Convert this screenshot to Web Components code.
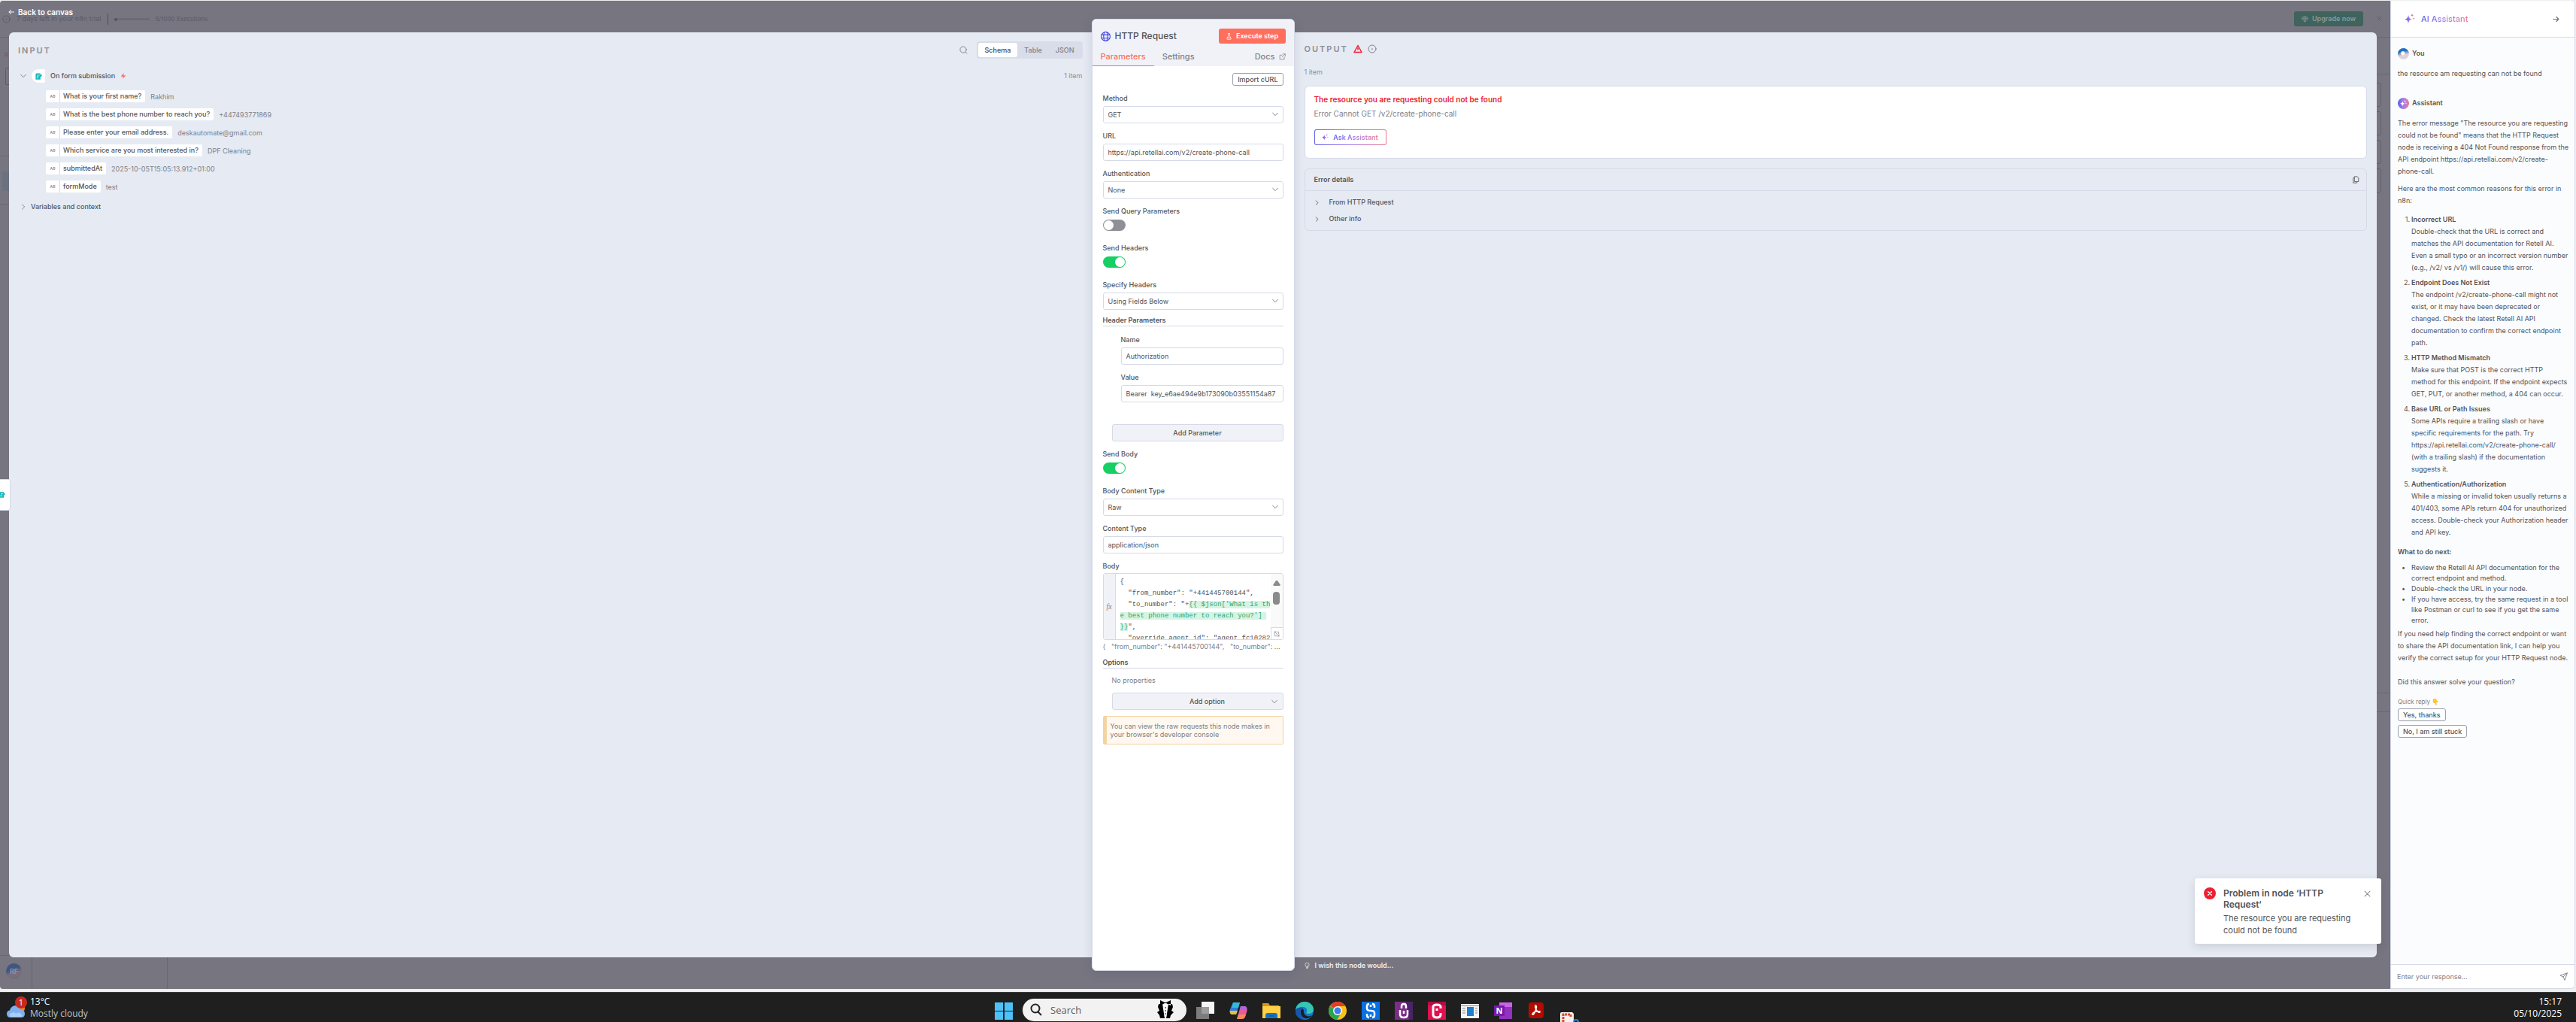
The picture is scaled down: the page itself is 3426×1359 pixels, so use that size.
<!DOCTYPE html>
<html lang="en">
<head>
<meta charset="utf-8">
<title>HTTP Request</title>
<style>
    html, body {
        height: 100%;
        margin: 0;
    }
    body {
        display: flex;
        flex-direction: column;
        overflow: hidden;
        background: #efeff0;
        color: #525356;
        font: 9px/14px Inter, "Liberation Sans", sans-serif;
        --border: #d6dae8;
        --panel: #e6eaf3;
        --muted: #7e8188;
        --primary: #ff6f5c;
        --ai: linear-gradient(90deg, #5b60e8, #aa7bec 50%, #ec7b8e);
    }
    main {
        flex: 1;
        min-height: 0;
        display: flex;
        padding: 1px 1px 4px 0;
    }
    node-editor {
        flex: 1;
        min-width: 0;
    }
    assistant-panel {
        width: 246px;
    }
</style>
</head>
<body>
<main>
    <node-editor>
        <input-panel></input-panel>
        <node-panel></node-panel>
        <output-panel></output-panel>
    </node-editor>
    <assistant-panel></assistant-panel>
</main>
<task-bar></task-bar>

<script>
const svg = (body, size = 12, box = 24) =>
    `<svg width="${size}" height="${size}" viewBox="0 0 ${box} ${box}" fill="none" stroke="currentColor" stroke-width="2" stroke-linecap="round" stroke-linejoin="round" aria-hidden="true">${body}</svg>`;

const SPARK = 'M9 3c1 7 3 9 9 10.500c-6 1.500-8 3.500-9 10.500c-1-7-3-9-9-10.500c6-1.500 8-3.500 9-10.500zM18 0c.4 2.500 1.500 3.500 4 4c-2.500.5-3.600 1.500-4 4c-.4-2.500-1.500-3.500-4-4c2.500-.5 3.600-1.500 4-4zM22 9l1 2 1.500.8-1.500.8-1 2-1-2-1.500-.8 1.500-.8z';
const ICONS = {
    down: '<path stroke-width="3" d="M2 7l10 10L22 7"/>',
    right: '<path stroke-width="3" d="M8 3l9 9-9 9"/>',
    back: '<path stroke-width="3" d="M22 12H3M11 4l-8 8 8 8"/>',
    forward: '<path stroke-width="3" d="M2 12h19M13 4l8 8-8 8"/>',
    close: '<path stroke-width="3" d="M3 3l18 18M21 3L3 21"/>',
    search: '<circle cx="11" cy="11" r="9"/><path d="M18 18l4 4"/>',
    info: '<circle cx="12" cy="12" r="10"/><path stroke-width="3" d="M12 12v1"/>',
    warning: '<path stroke-width="3" d="M12 3L2 21h20zM12 10v4"/>',
    bolt: '<path fill="currentColor" stroke="none" d="M14 0L2 14h9l-2 10 13-14h-9z"/>',
    flask: '<path d="M9 2h6M10 2v7L5 20q-1 2 1 2h12q2 0 1-2L14 9V2M7 16h10"/>',
    external: '<path d="M19 13v8H3V6h8M14 2h8v8M22 2L11 13"/>',
    globe: '<circle cx="12" cy="12" r="11"/><ellipse cx="12" cy="12" rx="5" ry="11"/><path d="M2 8h20M2 16h20"/>',
    copy: '<path d="M9 2h8l4 4v12H9zM6 6H4v16h12v-2"/>',
    bulb: '<path d="M9 16c0-3-4-4-4-9a7 6 0 0 1 14 0c0 5-4 6-4 9zM10 20h4M12 16v-5"/>',
    gem: '<path d="M6 3h12l5 6-11 13L1 9zM1 9h22M8 9l4 13 4-13-4-6z"/>',
    expand: '<path d="M3 9V3h6M3 3l18 18M21 15v6h-6M12 4h8v8M12 20H4v-8"/>',
    send: '<path d="M22 2L2 9l9 4 4 9zM22 2L11 13"/>',
    form: '<path fill="currentColor" stroke="none" d="M3 1h15v6l4-2 2 4-6 6v8H1V5z"/><path stroke="#fff" d="M7 8h7M6 13h5M6 18h3"/>'
};
const icon = (name, size) => svg(ICONS[name], size);
const spark = (size, fill = 'url(#ai)') =>
    svg(`<defs><linearGradient id="ai"><stop stop-color="#5b60e8"/><stop offset=".6" stop-color="#aa7bec"/><stop offset="1" stop-color="#ec7b8e"/></linearGradient></defs><path d="${SPARK}" fill="${fill}" stroke="none"/>`, size, 25);

const BASE = `
    :host, *, ::before, ::after { box-sizing: border-box; }
    svg { display: block; flex: none; }
    button, input, select { font: inherit; color: inherit; margin: 0; }
    button { padding: 0; border: 0; background: none; cursor: pointer; }
    a { color: inherit; text-decoration: none; }
    h1, h2, h3, p, ul, ol, dl, dd, pre { margin: 0; padding: 0; font: inherit; }
    ul, ol { list-style: none; }
`;

class BaseElement extends HTMLElement {
    constructor() {
        super();
        this.shadow = this.attachShadow({mode: 'open'});
    }
    connectedCallback() {
        this.shadow.innerHTML = `<style>${BASE}${this.styles}</style>${this.markup}`;
    }
}

/* a dimmed canvas page with the node dialog over it */
class NodeEditor extends BaseElement {
    get styles() {
        return `
        :host { position: relative; display: flex; flex-direction: column; background: #777580; border-radius: 4px 0 0 4px; overflow: hidden; }
        .under { position: absolute; inset: 0; color: #5d5b67; }
        .trial { position: absolute; left: 3px; top: 15px; display: flex; align-items: center; gap: 8px; height: 18px; }
        .trial span:last-child { font-size: 8px; }
        .bar { width: 47px; height: 3px; border-radius: 2px; background: #6a6b78; }
        .bar::before { content: ''; display: block; width: 4px; height: 4px; border-radius: 2px; background: #55535f; }
        .rule { width: 1px; height: 15px; background: #4e4c58; }
        .upgrade { position: absolute; right: 36px; top: 14px; height: 20px; width: 92px; display: flex; align-items: center; justify-content: center; gap: 5px; border-radius: 3px; background: #40635e; color: #8a9a99; font-weight: 600; }
        .x { position: absolute; right: 11px; top: 20px; }
        .lines { position: absolute; inset: 0; width: 100%; height: 100%; }
        .ghosts { position: absolute; right: 12px; top: 109px; display: grid; gap: 6px; }
        .ghosts i { width: 40px; height: 32px; border: 1px solid #62606c; border-radius: 3px; }
        .left-box { position: absolute; left: 7px; top: 89px; width: 20px; height: 23px; border: 1px solid #5d5b67; border-radius: 2px; }
        .left-fill { position: absolute; left: 3px; top: 227px; width: 20px; height: 26px; border-radius: 2px; background: #6b7180; }
        .knob { position: absolute; left: 6px; top: 69px; width: 5px; height: 5px; border: 1px solid #8f4358; border-radius: 50%; }
        .rf { position: absolute; left: 8px; bottom: 13px; width: 21px; height: 21px; border-radius: 50%; background: linear-gradient(160deg, #41567f 40%, #7d6d7c 60%, #6b6c7c); color: #8d93a6; font-weight: 700; text-align: center; line-height: 21px; }
        header { position: relative; height: 42px; padding: 8px 11px; color: #fff; }
        header a { display: inline-flex; align-items: center; gap: 5px; font-size: 10px; font-weight: 600; }
        .panels { position: relative; flex: 1; min-height: 0; display: grid; grid-template-columns: 1fr 270px 1fr; margin: 0 18px 0 12px; background: var(--panel); border-radius: 6px; }
        ::slotted(node-panel) { margin: -18px 0; }
        footer { position: relative; height: 42px; display: grid; grid-template-columns: 1fr 1fr; margin: 0 18px 0 12px; color: #eeeef2; }
        footer button { grid-column: 2; justify-self: start; align-self: start; display: flex; align-items: center; gap: 6px; padding: 4px 0 4px 147px; font-weight: 600; }
        .prev { position: absolute; left: -2px; top: 636px; width: 16px; height: 42px; border: 1px solid var(--border); border-radius: 3px; background: #fff; color: #0fb8be; display: grid; place-items: center start; }
        toast-message { position: absolute; right: 12px; bottom: 60px; width: 248px; }`;
    }
    get markup() {
        return `
        <div class="under">
            <svg class="lines" stroke="#696773"><path d="M0 48.500H12M0 206.500H12M0 270.500H12M0 1269.500H42M42.500 1272V1314M222.500 1272V1314M3161 48.500H3179M3161 97.500H3179M3161 920.500H3179M3161 945.500H3179"/></svg>
            <div class="trial">${icon('info', 11)}<span>7 days left in your n8n trial</span><i class="rule"></i><i class="bar"></i><span>5/1000 Executions</span></div>
            <button class="upgrade">${icon('gem', 9)}Upgrade now</button>
            <span class="x">${icon('close', 7)}</span>
            <i class="knob"></i><i class="left-box"></i><i class="left-fill"></i>
            <div class="ghosts"><i></i><i></i><i></i><i></i></div>
            <span class="rf">RF</span>
        </div>
        <header><a href="#canvas">${icon('back', 8)}Back to canvas</a></header>
        <div class="panels"><slot></slot></div>
        <footer><button>${icon('bulb', 9)}I wish this node would...</button></footer>
        <button class="prev" aria-label="Previous node">${icon('form', 8)}</button>
        <toast-message>
            <span slot="title">Problem in node ‘HTTP Request‘</span>
            The resource you are requesting could not be found
        </toast-message>`;
    }
}

class ToastMessage extends BaseElement {
    get styles() {
        return `
        :host { display: flex; align-items: flex-start; gap: 10px; padding: 12px 12px 10px; border-radius: 3px; background: #fff; box-shadow: 0 4px 12px rgba(40, 40, 60, .14); font-size: 11px; line-height: 16px; }
        .mark { width: 16px; height: 16px; border-radius: 50%; background: #ee1f32; color: #fff; display: grid; place-items: center; }
        .text { flex: 1; }
        h2 { margin-bottom: 3px; font-size: 12px; line-height: 15px; font-weight: 600; }
        button { padding: 4px 2px; color: #8d9098; }`;
    }
    get markup() {
        return `
        <span class="mark">${svg('<path stroke-width="4" d="M5 5l14 14M19 5L5 19"/>', 8)}</span>
        <div class="text"><h2><slot name="title"></slot></h2><p><slot></slot></p></div>
        <button aria-label="Close">${icon('close', 9)}</button>`;
    }
}

class InputPanel extends BaseElement {
    get rows() {
        return [
            ['What is your first name?', 'Rakhim'],
            ['What is the best phone number to reach you?', '+447493771869'],
            ['Please enter your email address.', 'deskautomate@gmail.com'],
            ['Which service are you most interested in?', 'DPF Cleaning'],
            ['submittedAt', '2025-10-05T15:05:13.912+01:00'],
            ['formMode', 'test']
        ];
    }
    get styles() {
        return `
        :host { display: block; padding: 12px; }
        .head, .group, .row, .pill, .tabs { display: flex; align-items: center; }
        h2 { flex: 1; color: #8c8f98; font-size: 11px; font-weight: 600; letter-spacing: 2px; }
        .head { color: var(--muted); gap: 12px; }
        .tabs { height: 23px; padding: 2px; border-radius: 3px; background: #d9dde9; font-weight: 500; }
        .tabs button { height: 19px; padding: 0 9px; border-radius: 3px; }
        .tabs .on { background: #fff; color: #45464a; }
        .group { margin-top: 14px; padding-left: 3px; font-weight: 500; }
        .group > svg { color: var(--muted); }
        .node { width: 18px; height: 18px; margin: 0 7px 0 7px; border-radius: 9px 2px 2px 9px; background: #fff; color: #0fb8be; display: grid; place-items: center; }
        .bolt { flex: 1; margin-left: 7px; color: var(--primary); }
        .count { color: #8c8f98; font-weight: 400; }
        dl { margin: 9px 0 0 37px; display: grid; gap: 7px; }
        .row { gap: 7px; }
        .pill { height: 16px; border-radius: 2px; background: #fff; font-weight: 500; }
        .pill i { width: 19px; border-right: 1px solid var(--border); font: 600 5px/16px Inter, sans-serif; text-align: center; color: #8a8d96; }
        .pill span { padding: 0 5px 0 4px; }
        dd { padding-top: 3px; color: var(--muted); }
        .vars { margin-top: 12px; gap: 6px; }`;
    }
    get markup() {
        return `
        <div class="head">
            <h2>INPUT</h2>
            <button aria-label="Search">${icon('search', 11)}</button>
            <div class="tabs"><button class="on">Schema</button><button>Table</button><button>JSON</button></div>
        </div>
        <div class="group">${icon('down', 8)}<span class="node">${icon('form', 9)}</span>On form submission<span class="bolt">${icon('bolt', 8)}</span><span class="count">1 item</span></div>
        <dl>${this.rows.map(([key, value]) => `<div class="row"><dt class="pill"><i>AB</i><span>${key}</span></dt><dd>${value}</dd></div>`).join('')}</dl>
        <div class="group vars">${icon('right', 8)}Variables and context</div>`;
    }
}

class OutputPanel extends BaseElement {
    get styles() {
        return `
        :host { display: block; padding: 15px 13px; }
        .head, .bar, li { display: flex; align-items: center; }
        .head { gap: 7px; color: var(--muted); }
        h2 { color: #8c8f98; font-size: 11px; font-weight: 600; letter-spacing: 2px; }
        .head .warn { color: #ee1f32; }
        .count { margin: 17px 0 11px; color: #8c8f98; }
        .card { height: 97px; padding: 9px 12px; border: 1px solid var(--border); border-radius: 6px; background: #fff; }
        .card h3 { color: #ea1f30; font-size: 10px; line-height: 16px; font-weight: 600; }
        .card p { margin: 3px 0 13px; color: var(--muted); font-size: 10px; line-height: 16px; }
        .ask { width: 96px; height: 21px; display: flex; align-items: center; justify-content: center; gap: 6px; border: 1px solid transparent; border-radius: 3px; background: linear-gradient(#fff, #fff) padding-box, var(--ai) border-box; font-weight: 600; }
        .ask span { background: var(--ai); background-clip: text; -webkit-background-clip: text; color: transparent; }
        .details { margin-top: 13px; border: 1px solid var(--border); border-radius: 6px; }
        .bar { height: 29px; justify-content: space-between; padding: 0 9px 0 12px; border-bottom: 1px solid var(--border); font-weight: 600; }
        ul { padding: 4px 12px; }
        li { height: 22px; gap: 13px; font-weight: 500; }`;
    }
    get markup() {
        return `
        <div class="head"><h2>OUTPUT</h2><span class="warn">${icon('warning', 12)}</span>${icon('info', 12)}</div>
        <p class="count">1 item</p>
        <section class="card">
            <h3>The resource you are requesting could not be found</h3>
            <p>Error Cannot GET /v2/create-phone-call</p>
            <button class="ask">${spark(9)}<span>Ask Assistant</span></button>
        </section>
        <section class="details">
            <div class="bar">Error details<button aria-label="Copy">${icon('copy', 10)}</button></div>
            <ul><li>${icon('right', 7)}From HTTP Request</li><li>${icon('right', 7)}Other info</li></ul>
        </section>`;
    }
}

/* kind: text, select or switch */
class FormField extends BaseElement {
    get styles() {
        return `
        :host { display: block; margin-bottom: 10px; }
        :host([kind=switch]) { margin-bottom: 16px; }
        label { display: block; font-weight: 500; }
        .box { position: relative; margin-top: 3px; }
        .box input, select { display: block; width: 100%; height: 23px; padding: 0 6px; border: 1px solid var(--border); border-radius: 3px; background: #fff; appearance: none; outline: none; }
        .box svg { position: absolute; right: 7px; top: 7px; color: var(--muted); pointer-events: none; }
        .switch { display: block; appearance: none; width: 30px; height: 15px; margin: 4px 0 0; padding: 1px; border-radius: 8px; background: #8f9096; }
        .switch::before { content: ''; display: block; width: 13px; height: 13px; border-radius: 50%; background: #fff; }
        .switch:checked { background: #17cf65; }
        .switch:checked::before { margin-left: 15px; }`;
    }
    get control() {
        const value = this.getAttribute('value');
        switch (this.getAttribute('kind')) {
            case 'switch':
                return `<input class="switch" id="field" type="checkbox" ${this.hasAttribute('checked') ? 'checked' : ''}>`;
            case 'select':
                return `<div class="box"><select id="field"><option>${value}</option></select>${icon('down', 8)}</div>`;
            default:
                return `<div class="box"><input id="field" type="text" value="${value}"></div>`;
        }
    }
    get markup() {
        return `<label for="field">${this.getAttribute('label')}</label>${this.control}`;
    }
}

class NodePanel extends BaseElement {
    get styles() {
        return `
        :host { position: relative; display: block; border: 1px solid var(--border); border-radius: 6px; background: #fff; box-shadow: 0 4px 14px rgba(60, 60, 100, .14); overflow: hidden; }
        header { height: 62px; padding: 12px 11px 0; background: #f1f2f8; }
        .title, nav { display: flex; align-items: center; }
        .title svg:first-child { color: #3b42e6; }
        h1 { flex: 1; margin-left: 6px; font-size: 12px; line-height: 20px; font-weight: 500; }
        .run { width: 89px; height: 20px; display: flex; align-items: center; justify-content: center; gap: 5px; border-radius: 3px; background: var(--primary); color: #fff; font-weight: 600; }
        .title .run svg { color: #fff; }
        nav { margin-top: 4px; height: 26px; font-size: 11px; font-weight: 500; color: var(--muted); }
        nav a:first-child { margin-left: -11px; padding: 0 11px; height: 26px; line-height: 27px; border-bottom: 1px solid var(--primary); color: var(--primary); }
        nav a:nth-child(2) { flex: 1; padding-left: 11px; }
        nav a:last-child { display: flex; align-items: center; gap: 5px; }
        .body { padding: 9px 14px 0; }
        .outline { display: block; height: 17px; margin: 0 0 10px auto; padding: 0 6px; border: 1px solid #9c9fac; border-radius: 3px; background: #fff; font-weight: 500; }
        h3 { height: 15px; border-bottom: 1px solid var(--border); font-weight: 600; }
        h3.up { margin-top: -3px; }
        .nested { padding: 11px 0 0 24px; }
        .wide { position: relative; display: flex; align-items: center; justify-content: center; height: 23px; margin-left: 12px; border: 1px solid var(--border); border-radius: 3px; background: #f1f2f7; font-weight: 500; }
        .wide.param { width: calc(100% - 12px); margin: 29px 0 10px 12px; }
        .wide select { appearance: none; width: 100%; height: 21px; border: 0; padding: 0 12px 0 38px; background: none; text-align: center; text-align-last: center; }
        .wide svg { position: absolute; right: 7px; top: 7px; color: var(--muted); pointer-events: none; }
        .label { font-weight: 500; }
        .editor { display: flex; height: 89px; margin: 2px 0; border: 1px solid var(--border); border-radius: 3px; overflow: hidden; }
        .fx { width: 16px; background: #f1f2f7; border-right: 1px solid var(--border); display: grid; place-items: center; font: italic 10px "Liberation Serif", serif; color: var(--muted); }
        pre { flex: 1; min-width: 0; padding: 4px 0 0 6px; font: 9px/15px "Liberation Mono", monospace; white-space: pre; outline: none; overflow: hidden; }
        pre mark { background: #d5f4e3; color: #2fa473; }
        .scroll { width: 16px; background: #fafafa; display: flex; flex-direction: column; align-items: center; }
        .scroll > svg { margin: 8px 0; }
        .scroll i { width: 9px; height: 17px; border-radius: 4px; background: #8b8b8b; }
        .scroll button { margin-top: auto; width: 16px; height: 16px; display: grid; place-items: center; border: 1px solid var(--border); border-width: 1px 0 0 1px; background: #fff; color: var(--muted); }
        .preview { color: var(--muted); white-space: pre; margin-bottom: 7px; }
        .none { margin: 9px 0 9px 12px; color: var(--muted); }
        .notice { margin-top: 8px; padding: 7px 5px; border: 1px solid #f4d3a1; border-left-width: 5px; border-radius: 2px; background: #fef8f0; color: var(--muted); line-height: 11px; }`;
    }
    get markup() {
        return `
        <header>
            <div class="title">${icon('globe', 13)}<h1>HTTP Request</h1><button class="run">${icon('flask', 9)}Execute step</button></div>
            <nav><a href="#parameters">Parameters</a><a href="#settings">Settings</a><a href="#docs">Docs${icon('external', 9)}</a></nav>
        </header>
        <div class="body">
            <button class="outline">Import cURL</button>
            <form-field kind="select" label="Method" value="GET"></form-field>
            <form-field label="URL" value="https://api.retellai.com/v2/create-phone-call"></form-field>
            <form-field kind="select" label="Authentication" value="None"></form-field>
            <form-field kind="switch" label="Send Query Parameters"></form-field>
            <form-field kind="switch" label="Send Headers" checked></form-field>
            <form-field kind="select" label="Specify Headers" value="Using Fields Below"></form-field>
            <h3 class="up">Header Parameters</h3>
            <div class="nested">
                <form-field label="Name" value="Authorization"></form-field>
                <form-field label="Value" value="Bearer  key_e6ae494e9b173090b03551154a87"></form-field>
            </div>
            <button class="wide param">Add Parameter</button>
            <form-field kind="switch" label="Send Body" checked></form-field>
            <form-field kind="select" label="Body Content Type" value="Raw"></form-field>
            <form-field label="Content Type" value="application/json"></form-field>
            <p class="label" id="body-label">Body</p>
            <div class="editor">
                <span class="fx">fx</span>
<pre role="textbox" aria-labelledby="body-label" aria-multiline="true" contenteditable="true" spellcheck="false">{
  "from_number": "+441445700144",
  "to_number": "+<mark>{{ $json['What is th</mark>
<mark>e best phone number to reach you?'] </mark>
<mark>}}</mark>",
  "override_agent_id": "agent_fc10282</pre>
                <div class="scroll"><svg width="10" height="8"><path fill="#8b8b8b" d="M4 1h2l4 6-1 1H1L0 7z"/></svg><i></i><button aria-label="Expand">${icon('expand', 8)}</button></div>
            </div>
            <p class="preview">{   "from_number": "+441445700144",   "to_number": ...</p>
            <h3>Options</h3>
            <p class="none">No properties</p>
            <div class="wide"><select aria-label="Add option"><option>Add option</option></select>${icon('down', 8)}</div>
            <p class="notice">You can view the raw requests this node makes in your browser's developer console</p>
        </div>`;
    }
}

class AssistantPanel extends BaseElement {
    get styles() {
        return `
        :host { display: flex; flex-direction: column; border: 1px solid var(--border); border-width: 0 1px 1px; border-radius: 0 6px 6px 0; background: #fbfcfe; overflow: hidden; line-height: 16px; }
        header { display: flex; align-items: center; height: 49px; padding: 0 20px 0 18px; border-bottom: 1px solid var(--border); background: #fff; }
        header h2 { margin-left: 8px; font-size: 11px; font-weight: 500; background: var(--ai); background-clip: text; -webkit-background-clip: text; color: transparent; }
        header button { margin-left: auto; color: #6c6e76; }
        .chat { flex: 1; padding: 13px 6px 0 9px; }
        .who { display: flex; align-items: center; gap: 4px; height: 16px; font-weight: 600; }
        .who i { width: 15px; height: 15px; border-radius: 50%; display: grid; place-items: center; }
        .me { background: radial-gradient(ellipse at 45% 45%, #fff 15%, transparent 30%), linear-gradient(165deg, #1b6fc4 30%, #e9cdd0 60%, #cfdcea); }
        .bot { background: var(--ai); }
        .mine { margin: 11px 0 23px; }
        .intro { margin: 11px 0 7px; }
        ol { counter-reset: n; margin: 9px 0 10px 18px; }
        ol li { position: relative; margin-bottom: 4px; counter-increment: n; }
        ol li::before { content: counter(n) '.'; position: absolute; right: 100%; margin-right: 2px; }
        ol li:last-child { margin-bottom: 0; }
        b { display: block; font-weight: 600; }
        ul { margin: 6px 0 3px 18px; line-height: 14px; }
        ul li { position: relative; }
        ul li::before { content: '•'; position: absolute; right: 100%; margin-right: 8px; }
        .keep { white-space: nowrap; }
        .ask { margin: 16px 0 12px; }
        .quick { font-size: 8px; line-height: 12px; color: var(--muted); margin-bottom: 3px; }
        .replies { display: grid; justify-items: start; gap: 5px; }
        .replies button { height: 17px; padding: 0 6px; border: 1px solid #9c9fac; border-radius: 3px; background: #fff; font-weight: 500; line-height: 15px; }
        form { display: flex; align-items: center; height: 32px; padding: 0 9px 0 8px; border-top: 1px solid var(--border); background: #fff; }
        form input { flex: 1; border: 0; padding: 0; outline: none; background: none; }
        form input::placeholder { color: var(--muted); }
        form button { color: var(--muted); }`;
    }
    get markup() {
        return `
        <header>${spark(14)}<h2>AI Assistant</h2><button aria-label="Collapse">${icon('forward', 9)}</button></header>
        <div class="chat">
            <div class="who"><i class="me"></i>You</div>
            <p class="mine">the resource am requesting can not be found</p>
            <div class="who"><i class="bot">${spark(9, '#fff')}</i>Assistant</div>
            <p class="intro">The error message "The resource you are requesting could not be found" means that the HTTP Request node is receiving a 404 Not Found response from the API endpoint https://api.retellai.com/v2/create-<span class="keep">phone-call.</span></p>
            <p>Here are the most common reasons for this error in n8n:</p>
            <ol>
                <li><b>Incorrect URL</b>Double-check that the URL is correct and matches the API documentation for Retell AI.<br>Even a small typo or an incorrect version number (e.g., /v2/ vs /v1/) will cause this error.</li>
                <li><b>Endpoint Does Not Exist</b>The endpoint /v2/create-phone-call might not exist, or it may have been deprecated or changed. Check the latest Retell AI API documentation to confirm the correct endpoint path.</li>
                <li><b>HTTP Method Mismatch</b>Make sure that POST is the correct HTTP<br>method for this endpoint. If the endpoint expects<br>GET, PUT, or another method, a 404 can occur.</li>
                <li><b>Base URL or Path Issues</b>Some APIs require a trailing slash or have<br>specific requirements for the path. Try https://api.retellai.com/v2/create-phone-call/ (with a trailing slash) if the documentation suggests it.</li>
                <li><b>Authentication/Authorization</b>While a missing or invalid token usually returns a 401/403, some APIs return 404 for unauthorized access. Double-check your Authorization header and API key.</li>
            </ol>
            <b>What to do next:</b>
            <ul>
                <li>Review the Retell AI API documentation for the correct endpoint and method.</li>
                <li>Double-check the URL in your node.</li>
                <li>If you have access, try the same request in a tool like Postman or curl to see if you get the same error.</li>
            </ul>
            <p>If you need help finding the correct endpoint or want to share the API documentation link, I can help you verify the correct setup for your HTTP Request node.</p>
            <p class="ask">Did this answer solve your question?</p>
            <p class="quick">Quick reply 👇</p>
            <div class="replies"><button>Yes, thanks</button><button>No, I am still stuck</button></div>
        </div>
        <form><input type="text" placeholder="Enter your response..." aria-label="Enter your response"><button type="button" aria-label="Send">${icon('send', 11)}</button></form>`;
    }
}

class TaskBar extends BaseElement {
    get apps() {
        const tile = (name, fill, body) => [name, `<rect width="24" height="24" fill="${fill}"/>${body}`];
        return [
            ['Task view', '<path fill="#f5f5f5" d="M7 0h17v16H7z"/><path fill="#8d8d8d" fill-opacity=".85" d="M0 7h17v16H0z"/>'],
            ['Copilot', '<path d="M5 1h9l-5 16H3q-4-2-2-7z" fill="#2f7de0"/><path d="M5 1h9l-2 7H3z" fill="#35b9d8"/><path d="M3 12h8l-2 5H3q-3-1-2-5z" fill="#e0c23f"/><path d="M15 6h6q4 2 2 8l-2 6q-1 3-5 3H10z" fill="#e85a9b"/><path d="M15 6h6q3 1 2 5h-9z" fill="#a569e2"/><path d="M12 17h10l-1 3q-1 3-5 3h-6z" fill="#f3895d"/>'],
            ['File Explorer', '<path fill="#d9960f" d="M0 2h8l2 3h12v8H0z"/><path fill="#ffcf48" d="M0 6h24v16H0z"/><path fill="#1773c4" d="M4 22v-4q0-3 3-3h10q3 0 3 3v4z"/><path stroke="#0c4d8c" d="M8 19h8"/>'],
            ['Edge', '<circle cx="12" cy="12" r="12" fill="#1577cd"/><path d="M0 11C1 4 6 0 12 0c7 0 12 5 12 10 0 4-3 6-7 6-3 0-3-1-2-3 1-3-1-6-5-6-5 0-9 2-10 4z" fill="#37c6b4"/><path d="M9 9c-4 3-3 10 3 13 4 1 8-1 10-4-5 3-10 1-11-4 0-2 0-4-2-5z" fill="#1f1f1f"/><path d="M0 11c3-4 9-4 10-2-5 2-5 10 1 14C4 24-1 17 0 11z" fill="#1657a8"/>'],
            ['Chrome', '<circle cx="12" cy="12" r="12" fill="#fbc116"/><path d="M12 12L2 5.500A12 12 0 0 1 22.500 6H12z" fill="#e33b2e"/><path d="M12 12L1.600 6A12 12 0 0 0 11 24l6-9z" fill="#2da44e"/><circle cx="12" cy="12" r="6" fill="#fff"/><circle cx="12" cy="12" r="4.500" fill="#3b7ded"/>'],
            tile('Shadow', '#0b70e0', '<path stroke="#fff" stroke-width="2.500" fill="none" d="M17 8V6q0-3-3-3M10 3Q7 3 7 6v3q0 3 5 3t5 3v3q0 3-3 3M10 21q-3 0-3-3v-2M12 4v3M12 17v3"/>'),
            tile('Lock', '#7a2f86', '<path fill="#4a2368" d="M15 0h9v24h-5z"/><path stroke="#fff" stroke-width="2.500" fill="none" d="M9 9V6q0-3 3-3t3 3v3M7 11v6q0 4 5 4t5-4v-6M12 12v4"/>'),
            tile('Capture', '#e0114f', '<path fill="#b30d45" d="M0 0h24v5H0z"/><path stroke="#fff" stroke-width="3" fill="none" d="M17 9V7q0-3-5-3T7 7v10q0 4 5 4t5-4v-2M12 9v3"/>'),
            ['Window', '<path fill="#f4f4f4" d="M0 3h24v19H0z"/><path fill="#1c7fd0" d="M8 7h9v12H8z"/><path stroke="#8a8a8a" d="M0 5.500h24M2 9h4M2 12h4M2 15h4M19 9h3M19 12h3M19 15h3"/>'],
            ['OneNote', '<path fill="#ca64ea" d="M7 1h17v6H7z"/><path fill="#9332bf" d="M7 7h17v16H7z"/><path fill="#7719aa" d="M0 5h14v14H0z"/><text x="7" y="16" text-anchor="middle" font-family="Open Sans" font-size="11" font-weight="700" fill="#fff">N</text>'],
            ['Acrobat', '<rect x="2" y="1" width="20" height="21" rx="4" fill="#b30b00"/><path fill="none" stroke="#fff" stroke-width="1.500" d="M11 5q3 0 0 7-2 6-4 5-1-2 5-4 6-1 5 1-2 1-4-2-3-4-2-7z"/>']
        ];
    }
    get styles() {
        return `
        :host { display: grid; grid-template-columns: 1fr auto 1fr; align-items: center; height: 40px; background: #1f1f1f; border-top: 1px solid #3b3b3b; color: #fff; font: 12px/16px "Open Sans", "Noto Sans", sans-serif; }
        .weather { display: flex; align-items: center; gap: 5px; padding-left: 9px; text-align: left; line-height: 16px; }
        .weather small { display: block; font-size: 12px; color: #c4c4c4; }
        .sky { position: relative; width: 26px; height: 30px; }
        .sky svg { position: absolute; left: 0; bottom: 1px; }
        .sky i { position: absolute; left: 11px; top: 0; width: 16px; height: 16px; border-radius: 50%; background: #c72a1c; font: 11px/16px "Open Sans", sans-serif; text-align: center; }
        .apps { display: flex; align-items: center; gap: 20px; padding-top: 8px; height: 39px; }
        .start { margin-right: -7px; }
        .search { display: flex; align-items: center; width: 218px; height: 30px; margin: -2px -7px 0 0; padding: 0 16px 0 10px; border-radius: 15px; background: #f2f2f2; color: #303030; }
        .search input { flex: 1; min-width: 0; margin-left: 9px; border: 0; background: none; outline: none; font-size: 13px; }
        .search input::placeholder { color: #5b5b5b; }
        .snip { align-self: flex-end; overflow: hidden; }
        time { padding-right: 19px; text-align: right; }
        time span { display: block; }`;
    }
    get markup() {
        return `
        <button class="weather">
            <span class="sky"><svg width="24" height="20" viewBox="0 0 24 20"><circle cx="19" cy="7" r="5" fill="#f08a24"/><path d="M5 19q-5 0-5-5 0-4 4-4.500Q6 3 12 3q5 0 6 6 6 0 6 5 0 5-5 5z" fill="#7fb0ee"/><path d="M5 18q-3-3 1-5 5-2 6 1 4-3 7 0 2 3 0 4z" fill="#a9cdf8"/></svg><i>1</i></span>
            <span>13°C<small>Mostly cloudy</small></span>
        </button>
        <div class="apps">
            <button class="start" aria-label="Start"><svg width="24" height="24"><path fill="#4cc2f8" d="M0 1h11v11H0zM13 1h11v11H13zM0 13h11v11H0zM13 13h11v11H13z"/></svg></button>
            <label class="search"><svg width="16" height="18" viewBox="0 0 16 18" fill="none" stroke="#222" stroke-width="2"><circle cx="7" cy="7" r="5.500"/><path d="M10 11l5 5"/></svg><input type="search" placeholder="Search" aria-label="Search"><svg width="24" height="26" viewBox="0 0 24 26"><path fill="#000" d="M5 0l6 3h2l6-3v7l-6-3h-2L5 7zM3 5h5l3 19H5L4 20l-3-4 3-2-2-5zM21 5h-5l-3 19h5l1-4 4-4-3-2 2-5z"/><path fill="#fff" d="M9 7l3-2 3 2-2 16h-2z"/><path stroke="#000" d="M12 9v2M12 13v2M12 17v2"/></svg></label>
            ${this.apps.map(([name, body]) => `<button aria-label="${name}"><svg width="24" height="24" viewBox="0 0 24 24">${body}</svg></button>`).join('')}
            <button class="snip" aria-label="Snipping Tool"><svg width="28" height="14" viewBox="0 0 28 14"><path fill="#f2f2f2" d="M0 14V3q0-2 2-2h14l2 2v11z"/><path fill="none" stroke="#dd4b25" stroke-width="3" stroke-dasharray="3 1" d="M4 14V4h10v4"/><circle cx="21" cy="14" r="3" fill="none" stroke="#1b8fd6" stroke-width="2"/></svg></button>
        </div>
        <time datetime="2025-10-05T15:17"><span>15:17</span><span>05/10/2025</span></time>`;
    }
}

const elements = {
    'toast-message': ToastMessage,
    'form-field': FormField,
    'input-panel': InputPanel,
    'node-panel': NodePanel,
    'output-panel': OutputPanel,
    'node-editor': NodeEditor,
    'assistant-panel': AssistantPanel,
    'task-bar': TaskBar
};
for (const [name, type] of Object.entries(elements)) {
    if (!customElements.get(name)) {
        customElements.define(name, type);
    }
}
</script>
</body>
</html>
